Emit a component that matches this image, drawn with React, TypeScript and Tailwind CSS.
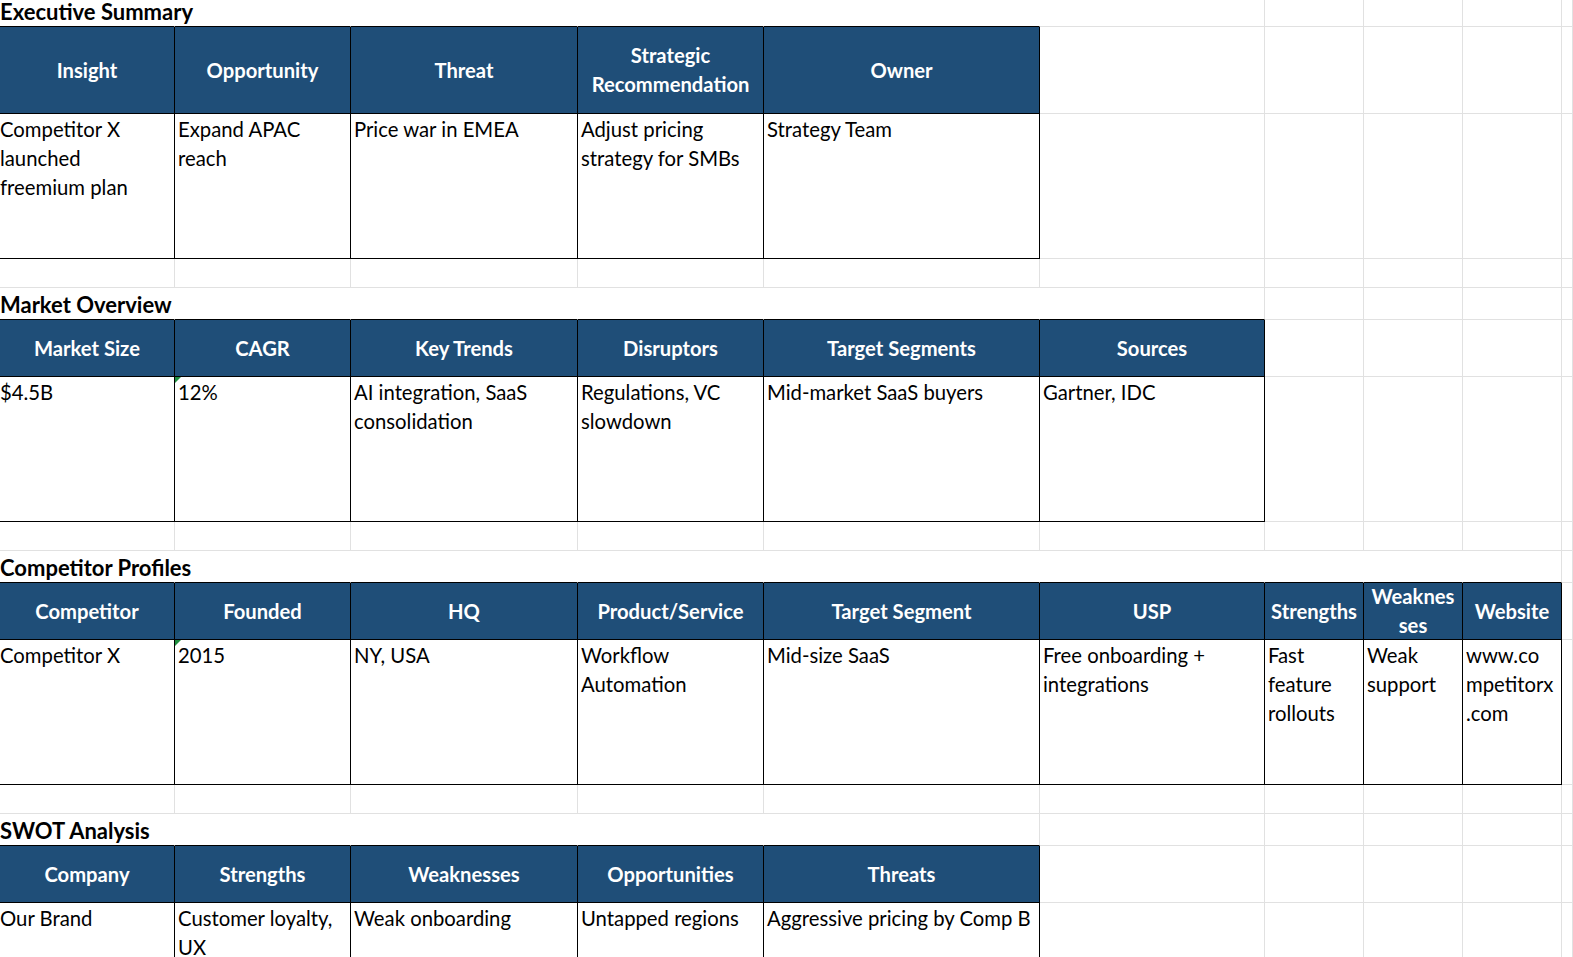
import React from "react";

type Row =
  | { kind: "title"; text: string; merge: number; table: number }
  | { kind: "header"; cells: string[][] }
  | { kind: "data"; cells: string[][]; tri?: number[] }
  | { kind: "empty" };

const rows: Row[] = [
  { kind: "title", text: "Executive Summary", merge: 6, table: 5 },
  {
    kind: "header",
    cells: [["Insight"], ["Opportunity"], ["Threat"], ["Strategic", "Recommendation"], ["Owner"]],
  },
  {
    kind: "data",
    cells: [
      ["Competitor X", "launched", "freemium plan"],
      ["Expand APAC", "reach"],
      ["Price war in EMEA"],
      ["Adjust pricing", "strategy for SMBs"],
      ["Strategy Team"],
    ],
  },
  { kind: "empty" },
  { kind: "title", text: "Market Overview", merge: 6, table: 6 },
  {
    kind: "header",
    cells: [["Market Size"], ["CAGR"], ["Key Trends"], ["Disruptors"], ["Target Segments"], ["Sources"]],
  },
  {
    kind: "data",
    cells: [
      ["$4.5B"],
      ["12%"],
      ["AI integration, SaaS", "consolidation"],
      ["Regulations, VC", "slowdown"],
      ["Mid-market SaaS buyers"],
      ["Gartner, IDC"],
    ],
    tri: [1],
  },
  { kind: "empty" },
  { kind: "title", text: "Competitor Profiles", merge: 9, table: 9 },
  {
    kind: "header",
    cells: [
      ["Competitor"],
      ["Founded"],
      ["HQ"],
      ["Product/Service"],
      ["Target Segment"],
      ["USP"],
      ["Strengths"],
      ["Weaknes", "ses"],
      ["Website"],
    ],
  },
  {
    kind: "data",
    cells: [
      ["Competitor X"],
      ["2015"],
      ["NY, USA"],
      ["Workflow", "Automation"],
      ["Mid-size SaaS"],
      ["Free onboarding +", "integrations"],
      ["Fast", "feature", "rollouts"],
      ["Weak", "support"],
      ["www.co", "mpetitorx", ".com"],
    ],
    tri: [1],
  },
  { kind: "empty" },
  { kind: "title", text: "SWOT Analysis", merge: 5, table: 5 },
  {
    kind: "header",
    cells: [["Company"], ["Strengths"], ["Weaknesses"], ["Opportunities"], ["Threats"]],
  },
  {
    kind: "data",
    cells: [
      ["Our Brand"],
      ["Customer loyalty,", "UX"],
      ["Weak onboarding"],
      ["Untapped regions"],
      ["Aggressive pricing by Comp B"],
    ],
  },
];

const NCOLS = 10;

const base = "box-border border-r border-b border-[#e1e1e1] min-w-0";

function renderRow(row: Row, ri: number) {
  const out: React.ReactNode[] = [];
  for (let c = 0; c < NCOLS; c++) {
    const key = `${ri}-${c}`;
    if (row.kind === "empty") {
      out.push(<div key={key} className={base} />);
      continue;
    }
    if (row.kind === "title") {
      const hideR = c < row.merge - 1;
      const blackB = c < row.table;
      out.push(
        <div
          key={key}
          className={`${base} relative ${hideR ? "border-r-white" : ""} ${blackB ? "border-b-black" : ""}`}
        >
          {c === 0 && (
            <div className="absolute left-0 bottom-[2px] whitespace-nowrap font-bold text-[22px] leading-[24px] text-black">
              {row.text}
            </div>
          )}
        </div>
      );
      continue;
    }
    const cells = row.cells;
    if (c >= cells.length) {
      out.push(<div key={key} className={base} />);
      continue;
    }
    const lines = cells[c];
    if (row.kind === "header") {
      out.push(
        <div
          key={key}
          className={`${base} border-r-black border-b-black bg-[#1f4e78] flex flex-col items-center justify-center text-white font-bold text-[20.2px] leading-[29px]`}
        >
          {lines.map((l, i) => (
            <div key={i} className="whitespace-nowrap">
              {l}
            </div>
          ))}
        </div>
      );
    } else {
      const tri = row.tri?.includes(c);
      out.push(
        <div
          key={key}
          className={`${base} relative border-r-black border-b-black ${c === 0 ? "pl-0" : "pl-[3px]"} pt-[1px] text-black text-[20.3px] leading-[29px]`}
        >
          {tri && (
            <svg className="absolute left-0 top-0" width="6" height="6" viewBox="0 0 6 6">
              <polygon points="0,0 6,0 0,6" fill="#1e8e3e" />
            </svg>
          )}
          {lines.map((l, i) => (
            <div key={i} className="whitespace-nowrap">
              {l}
            </div>
          ))}
        </div>
      );
    }
  }
  return out;
}

export default function App() {
  return (
    <div className="w-[1573px] h-[957px] overflow-hidden bg-white font-[family-name:Lato,'Liberation_Sans',sans-serif]">
      <div className="grid grid-cols-[175px_176px_227px_186px_276px_225px_99px_99px_99px_1fr] grid-rows-[27px_87px_145px_29px_32px_57px_145px_29px_32px_57px_145px_29px_32px_57px_145px]">
        {rows.map((r, i) => renderRow(r, i))}
      </div>
    </div>
  );
}
